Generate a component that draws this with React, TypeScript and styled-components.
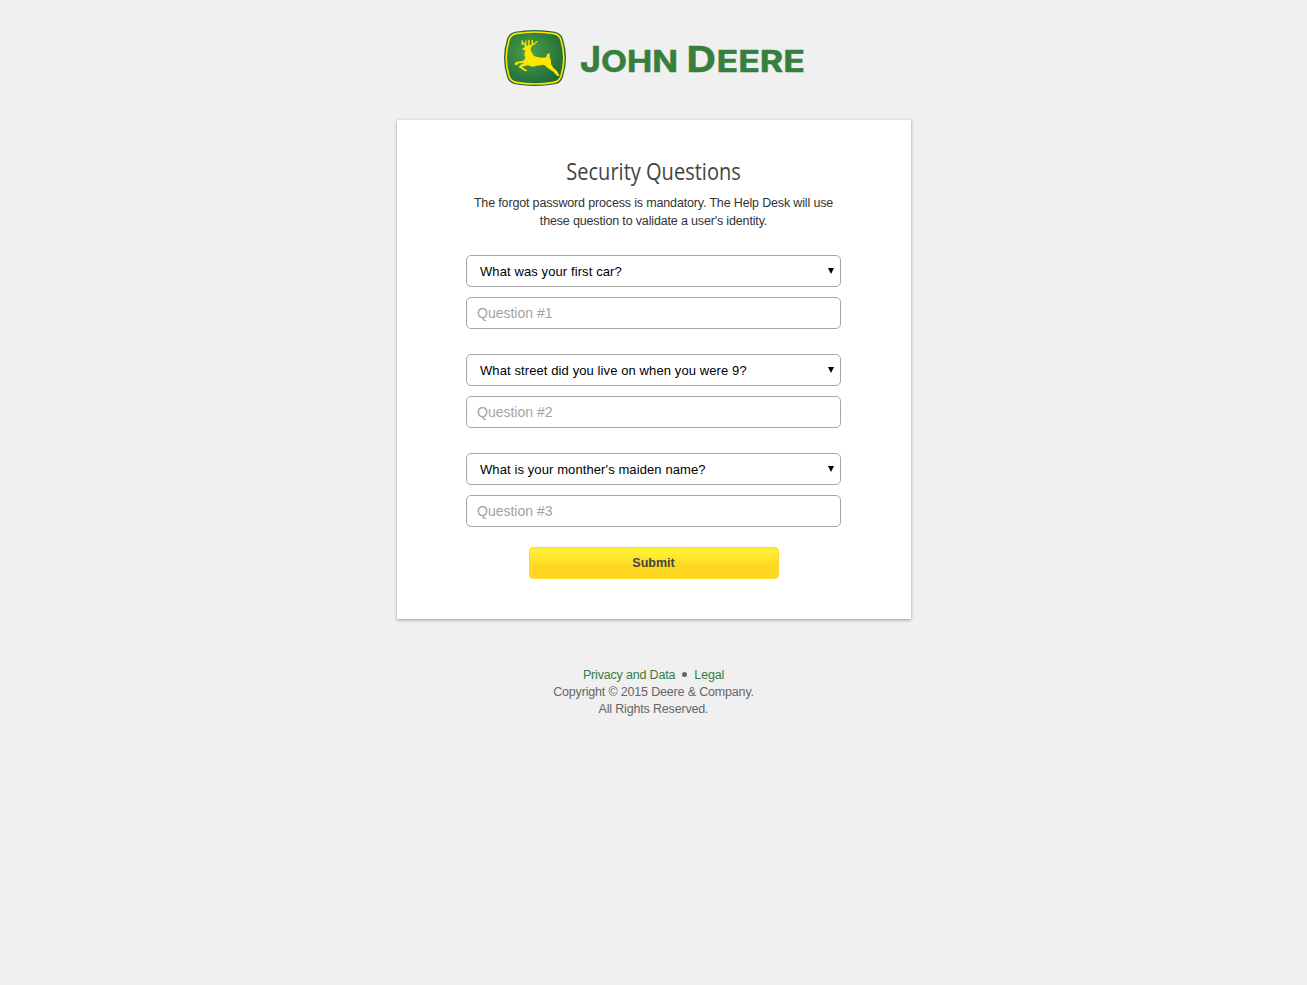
import React from "react";
import styled, { createGlobalStyle } from "styled-components";

const GlobalStyle = createGlobalStyle`
  * { box-sizing: border-box; }
  body {
    margin: 0;
    background: #f0f0f0;
    font-family: "Liberation Sans", Arial, sans-serif;
  }
`;

const Page = styled.div`
  min-height: 985px;
  padding-top: 30px;
  display: flex;
  flex-direction: column;
  align-items: center;
`;

const LogoSvg = styled.svg`
  display: block;
  width: 299px;
  height: 56px;
  overflow: visible;
`;

const Card = styled.main`
  width: 514px;
  height: 499px;
  margin-top: 34px;
  padding-top: 36px;
  background: #fff;
  box-shadow: 0 1px 3px rgba(0, 0, 0, 0.38);
  display: flex;
  flex-direction: column;
  align-items: center;
`;

const Title = styled.h1`
  margin: 0;
  font: 400 24px/30px "Open Sans", sans-serif;
  color: #444;
  white-space: nowrap;
  transform: scaleX(0.835);
`;

const Intro = styled.p`
  margin: 8px 0 0;
  width: 375px;
  font-size: 12.5px;
  letter-spacing: -0.155px;
  line-height: 18px;
  text-align: center;
  color: #333;
`;

const Form = styled.form`
  width: 375px;
  margin-top: 25px;
  display: flex;
  flex-direction: column;
  align-items: center;
`;

const Group = styled.div`
  width: 100%;
  display: flex;
  flex-direction: column;
  gap: 10px;
  margin-bottom: 25px;
  &:last-of-type { margin-bottom: 20px; }
`;

const SelectBox = styled.div`
  height: 32px;
  padding: 0 6px 0 13px;
  border: 1px solid #a6a6a6;
  border-radius: 5px;
  background: #fff;
  display: flex;
  align-items: center;
  justify-content: space-between;
`;

const SelectText = styled.span`
  font-size: 13px;
  letter-spacing: 0.1px;
  color: #000;
`;

const Answer = styled.input`
  height: 32px;
  width: 100%;
  padding: 0 10px;
  border: 1px solid #a6a6a6;
  border-radius: 5px;
  background: #fff;
  font: 14px "Liberation Sans", Arial, sans-serif;
  &::placeholder { color: #a3a3a3; opacity: 1; }
`;

const Submit = styled.button`
  width: 250px;
  height: 32px;
  padding: 0;
  border: 1px solid #ffd92b;
  border-radius: 4px;
  background: linear-gradient(#fff033 15%, #ffd520 65%);
  box-shadow: inset 0 0 8px rgba(255, 230, 50, 0.6);
  font: bold 12.5px "Liberation Sans", Arial, sans-serif;
  color: #444;
`;

const Footer = styled.footer`
  margin-top: 48px;
  font-size: 12.5px;
  letter-spacing: -0.17px;
  line-height: 17px;
  text-align: center;
  color: #666;
`;

const FooterLink = styled.a`
  color: #367c3b;
  text-decoration: none;
`;

const Dot = styled.span`
  display: inline-block;
  width: 5px;
  height: 5px;
  margin: 0 7px 2px;
  border-radius: 50%;
  background: #666;
  vertical-align: middle;
`;

const Logo = () => (
  <LogoSvg viewBox="0 0 299 56" role="img" aria-label="John Deere">
    <defs>
      <radialGradient id="field" cx="0.4" cy="0.4" r="0.65">
        <stop offset="0" stopColor="#4da14a" />
        <stop offset="1" stopColor="#1f6b38" />
      </radialGradient>
    </defs>
    <g transform="scale(0.33333) translate(-12 -18)">
      <path d="M46 23Q105 13 164 23Q184 27 189 46Q207 102 189 158Q184 177 164 181Q105 191 46 181Q26 177 21 158Q3 102 21 46Q26 27 46 23Z" fill="#1f6339" />
      <path d="M48 29Q105 19 162 29Q178 32 183 48Q200 102 183 156Q178 172 162 175Q105 185 48 175Q32 172 27 156Q10 102 27 48Q32 32 48 29Z" fill="url(#field)" stroke="#ffe600" strokeWidth="5" />
      <path d="M82 68Q68 61 66 49M74 61L64 59M77 62L78 50M86 68L87 47M88 66Q103 62 112 52M97 61L97 48" fill="none" stroke="#ffe600" strokeWidth="4" />
      <path d="M67 75L78 65L90 64L96 67L92 73L93 82L102 96Q120 103 138 100L142 90L149 87L149 100Q155 109 153 120L160 131L171 141L179 156L171 155L160 143L144 133L132 122Q113 124 98 128L83 124L66 128L83 141L75 142L56 129L60 123L73 118L56 118L50 124L43 121L48 114L70 110L76 103L73 90L76 78L69 79Z" fill="#ffe600" />
    </g>
    <g
      fill="#367f3d"
      stroke="#367f3d"
      strokeWidth="0.5"
      fontFamily="Inter, sans-serif"
      fontWeight="700"
    >
      <text x="76" y="41.7" fontSize="35" textLength="21" lengthAdjust="spacingAndGlyphs">J</text>
      <text x="97" y="41.7" fontSize="29.5" textLength="77" lengthAdjust="spacingAndGlyphs">OHN</text>
      <text x="182.5" y="41.7" fontSize="35" textLength="29.5" lengthAdjust="spacingAndGlyphs">D</text>
      <text x="212.5" y="41.7" fontSize="29.5" textLength="88.5" lengthAdjust="spacingAndGlyphs">EERE</text>
    </g>
  </LogoSvg>
);

const questions = [
  "What was your first car?",
  "What street did you live on when you were 9?",
  "What is your monther's maiden name?",
];

export default function App() {
  return (
    <Page>
      <GlobalStyle />
      <Logo />
      <Card>
        <Title>Security Questions</Title>
        <Intro>
          The forgot password process is mandatory. The Help Desk will use
          <br />
          these question to validate a user's identity.
        </Intro>
        <Form>
          {questions.map((question, i) => (
            <Group key={question}>
              <SelectBox>
                <SelectText>{question}</SelectText>
                <svg width="6" height="6" viewBox="0 0 6 6">
                  <path d="M0 0H6L3 6Z" fill="#000" />
                </svg>
              </SelectBox>
              <Answer placeholder={`Question #${i + 1}`} />
            </Group>
          ))}
          <Submit type="button">Submit</Submit>
        </Form>
      </Card>
      <Footer>
        <div>
          <FooterLink>Privacy and Data</FooterLink>
          <Dot />
          <FooterLink>Legal</FooterLink>
        </div>
        <div>Copyright © 2015 Deere &amp; Company.</div>
        <div>All Rights Reserved.</div>
      </Footer>
    </Page>
  );
}
